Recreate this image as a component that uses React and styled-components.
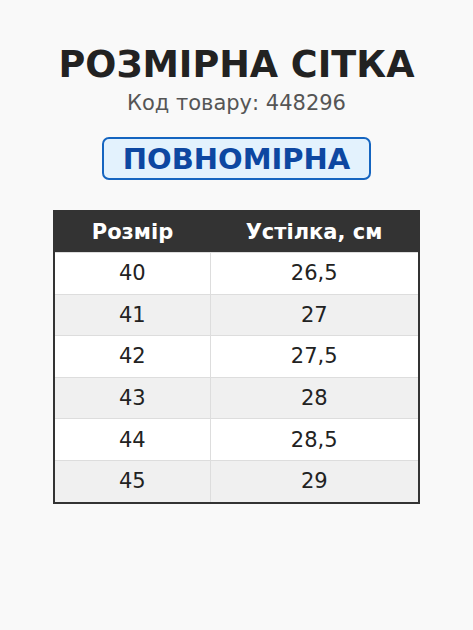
import React from "react"
import styled, { createGlobalStyle } from "styled-components"

const GlobalStyle = createGlobalStyle`
  html, body {
    margin: 0;
    padding: 0;
    background: #f9f9f9;
  }
  body {
    font-family: "DejaVu Sans", sans-serif;
    color: #222222;
  }
`

const Page = styled.div`
  display: flex;
  flex-direction: column;
  align-items: center;
  padding-top: 43px;
`

const Title = styled.h1`
  margin: 0;
  font-size: 36.6px;
  line-height: 44px;
  font-weight: 700;
  color: #222222;
`

const Code = styled.div`
  margin-top: 3px;
  font-size: 21px;
  line-height: 26px;
  color: #555555;
`

const Badge = styled.div`
  margin-top: 21px;
  width: 269px;
  box-sizing: border-box;
  height: 43px;
  display: flex;
  align-items: center;
  justify-content: center;
  background: #e3f2fd;
  border: 2px solid #1565c0;
  border-radius: 7px;
  font-size: 29px;
  font-weight: 700;
  color: #0d47a1;
`

const Table = styled.table`
  margin-top: 30px;
  width: 367px;
  border-collapse: collapse;
  border: 2px solid #333333;
  background: #ffffff;
`

const HeadCell = styled.th`
  height: 40px;
  padding: 0;
  background: #333333;
  color: #ffffff;
  font-size: 21px;
  font-weight: 700;
  text-align: center;
  width: ${p => p.$width};
`

const Row = styled.tr`
  background: ${p => (p.$odd ? "#f0f0f0" : "#ffffff")};
`

const Cell = styled.td`
  height: 40.6px;
  padding: 0;
  font-size: 21px;
  text-align: center;
  color: #222222;
  border: 1px solid #dddddd;
`

const sizes = [
  ["40", "26,5"],
  ["41", "27"],
  ["42", "27,5"],
  ["43", "28"],
  ["44", "28,5"],
  ["45", "29"],
]

const App = () => {
  return (
    <Page>
      <GlobalStyle />
      <Title>РОЗМІРНА СІТКА</Title>
      <Code>Код товару: 448296</Code>
      <Badge>ПОВНОМІРНА</Badge>
      <Table>
        <thead>
          <tr>
            <HeadCell $width="155px">Розмір</HeadCell>
            <HeadCell>Устілка, см</HeadCell>
          </tr>
        </thead>
        <tbody>
          {sizes.map(([size, insole], i) => (
            <Row key={size} $odd={i % 2 === 1}>
              <Cell>{size}</Cell>
              <Cell>{insole}</Cell>
            </Row>
          ))}
        </tbody>
      </Table>
    </Page>
  )
}

export default App
